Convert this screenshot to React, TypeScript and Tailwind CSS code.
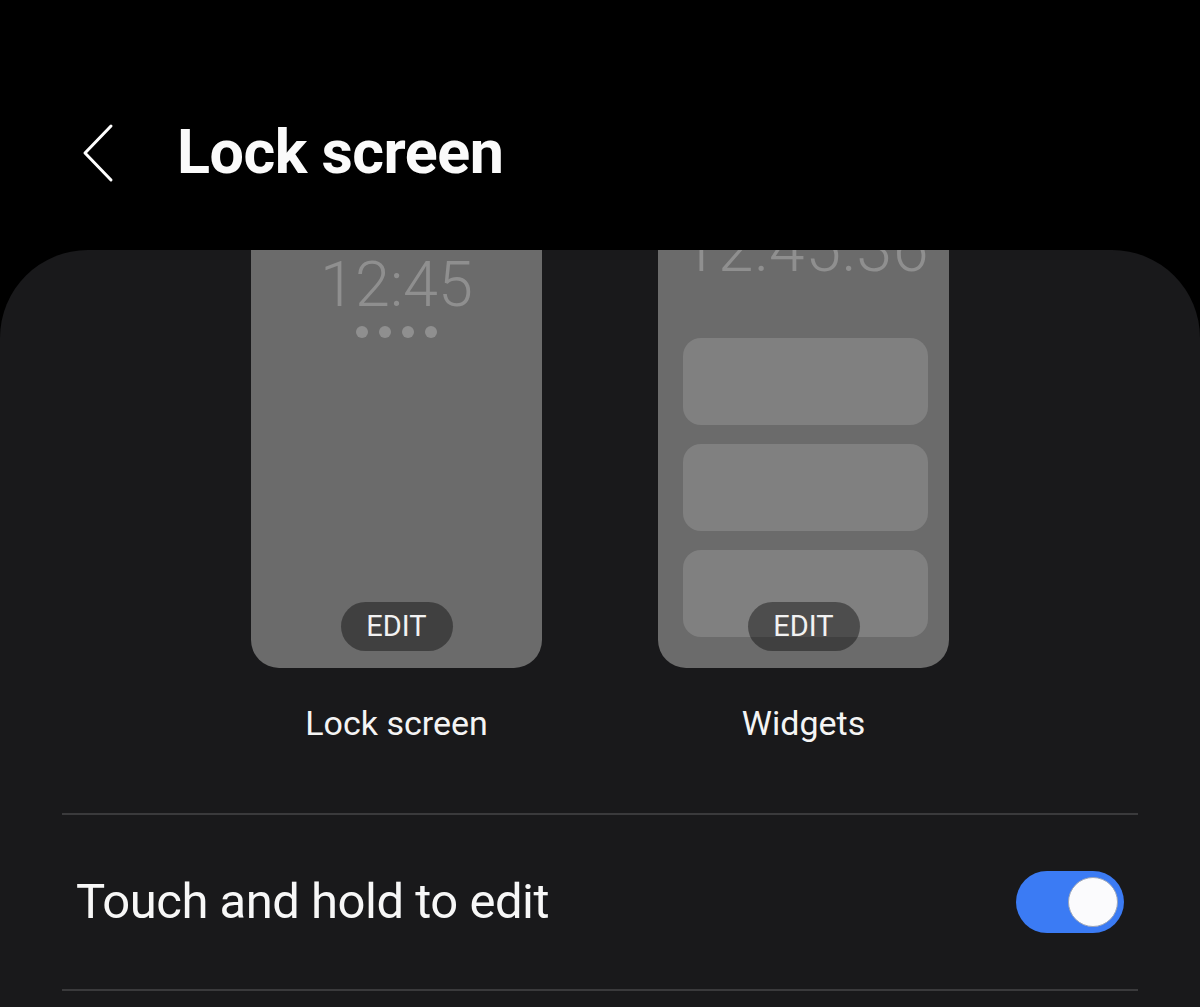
import React from "react";

function Toggle({ on }: { on: boolean }) {
  return (
    <div
      className={`flex h-[62px] w-[108px] items-center rounded-full px-[6px] ${
        on ? "justify-end bg-[#3b7bf4]" : "justify-start bg-[#555]"
      }`}
    >
      <div className="h-[50px] w-[50px] rounded-full border border-[#9aa4b8] bg-[#fbfbfd]" />
    </div>
  );
}

function EditPill() {
  return (
    <div className="flex h-[49px] w-[112px] items-center justify-center rounded-full bg-black/40 text-[29px] text-[#f2f2f2]">
      EDIT
    </div>
  );
}

function LockPreview() {
  return (
    <div className="flex h-[418px] w-[291px] flex-col items-center rounded-b-[28px] bg-[#6b6b6b] pb-[17px]">
      <div className="mt-[-5px] text-[63px] leading-[80px] font-light text-[#8f8f8f]">12:45</div>
      <div className="mt-[1px] flex gap-[11px]">
        {[0, 1, 2, 3].map((i) => (
          <span key={i} className="h-[12px] w-[12px] rounded-full bg-[#8f8f8f]" />
        ))}
      </div>
      <div className="mt-auto">
        <EditPill />
      </div>
    </div>
  );
}

function WidgetPreview() {
  return (
    <div className="relative flex h-[418px] w-[291px] flex-col items-center overflow-hidden rounded-b-[28px] bg-[#6b6b6b] pl-[25px] pr-[21px]">
      <div className="mt-[-40px] text-[64px] leading-[80px] font-light tracking-[1px] text-[#8f8f8f]">12:45:36</div>
      <div className="mt-[48px] flex w-full flex-col gap-[19px]">
        {[0, 1, 2].map((i) => (
          <div key={i} className="h-[87px] w-full rounded-[18px] bg-[#808080]" />
        ))}
      </div>
      <div className="absolute bottom-[17px] left-1/2 -translate-x-1/2">
        <EditPill />
      </div>
    </div>
  );
}

export default function App() {
  return (
    <div className="min-h-[1007px] w-[1200px] overflow-hidden bg-black font-['Roboto',sans-serif] text-white">
      {/* header */}
      <header className="flex h-[250px] items-center pt-[56px]">
        <button className="ml-[79px] flex h-[60px] w-[36px] items-center justify-center">
          <svg width="34" height="60" viewBox="0 0 34 60" fill="none">
            <path d="M31 3 L5 30 L31 57" stroke="white" strokeWidth="3" strokeLinecap="round" strokeLinejoin="round" />
          </svg>
        </button>
        <h1 className="ml-[62px] text-[61px] font-bold tracking-[-0.5px] text-[#fafafa]">Lock screen</h1>
      </header>

      {/* settings panel */}
      <main className="min-h-[757px] rounded-t-[88px] bg-[#19191b]">
        <div className="flex justify-center gap-[116px]">
          <div className="flex flex-col items-center">
            <LockPreview />
            <div className="mt-[30px] text-[34px] text-[#f4f4f4]">Lock screen</div>
          </div>
          <div className="flex flex-col items-center">
            <WidgetPreview />
            <div className="mt-[30px] text-[34px] text-[#f4f4f4]">Widgets</div>
          </div>
        </div>

        <div className="mx-[62px] mt-[64px] border-t-2 border-[#3a3a3c]" />
        <div className="mx-[62px] flex h-[174px] items-center justify-between pl-[14px] pr-[14px]">
          <span className="text-[49px] tracking-[-0.5px] text-[#f7f7f7]">Touch and hold to edit</span>
          <Toggle on />
        </div>
        <div className="mx-[62px] border-t-2 border-[#3a3a3c]" />
      </main>
    </div>
  );
}
